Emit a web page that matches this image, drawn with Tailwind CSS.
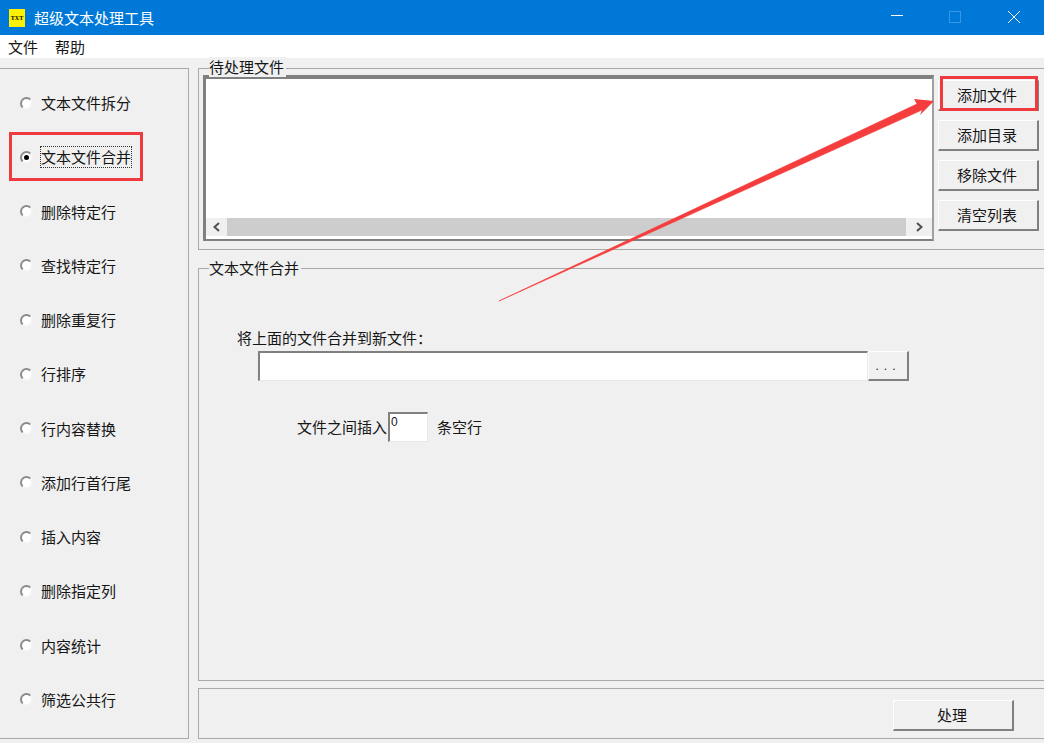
<!DOCTYPE html>
<html lang="zh">
<head>
<meta charset="utf-8">
<script src="https://cdn.jsdelivr.net/npm/@tailwindcss/browser@4"></script>
<title>超级文本处理工具</title>
</head>
<body>
<div class="relative flex h-[743px] w-[1044px] flex-col overflow-hidden bg-[#f0f0f0] font-['Noto_Sans_CJK_SC','Noto_Sans',sans-serif] text-[15px] leading-[20px] text-[#161616]">

  <!-- title bar -->
  <div class="flex h-[35px] shrink-0 items-center bg-[#0078d7] text-white">
    <div class="ml-[9px] flex h-[18px] w-[16px] items-center justify-center bg-[#fff200] font-['Liberation_Serif',serif] text-[6px] font-bold leading-none text-black">TXT</div>
    <span class="ml-[9px]">超级文本处理工具</span>
    <div class="mb-[2px] ml-auto flex items-center">
      <svg class="mr-[46px]" width="12" height="12" viewBox="0 0 12 12"><path d="M0 4.500H12" stroke="#fff" stroke-width="1"/></svg>
      <svg class="mr-[47px]" width="12" height="12" viewBox="0 0 12 12"><rect x=".5" y=".5" width="11" height="11" fill="none" stroke="#3b97e3"/></svg>
      <svg class="mr-[24px]" width="12" height="12" viewBox="0 0 12 12"><path d="M0 0L12 12M12 0L0 12" stroke="#fff" stroke-width="1"/></svg>
    </div>
  </div>

  <!-- menu bar -->
  <div class="flex h-[23px] shrink-0 items-center gap-[17px] bg-white pl-[8px]">
    <span>文件</span>
    <span>帮助</span>
  </div>

  <!-- main -->
  <div class="flex min-h-0 flex-1 gap-[9px] pt-[10px] pb-[4px]">

    <!-- left radios -->
    <div class="grid w-[189px] shrink-0 grid-rows-12 border border-l-0 border-[#a9a9a9] pt-[7px] pb-[11px] pl-[20px]">
      <div class="flex items-center gap-[8px]"><span class="h-[13px] w-[13px] rounded-full border-2 border-t-[#8a8a8a] border-r-[#f4f4f4] border-b-[#f4f4f4] border-l-[#8a8a8a] bg-white"></span><span>文本文件拆分</span></div>
      <div class="flex items-center gap-[8px]"><span class="flex h-[13px] w-[13px] items-center justify-center rounded-full border-2 border-t-[#8a8a8a] border-r-[#f4f4f4] border-b-[#f4f4f4] border-l-[#8a8a8a] bg-white"><span class="h-[5px] w-[5px] rounded-full bg-black"></span></span><span class="-ml-px border border-dotted border-[#333]">文本文件合并</span></div>
      <div class="flex items-center gap-[8px]"><span class="h-[13px] w-[13px] rounded-full border-2 border-t-[#8a8a8a] border-r-[#f4f4f4] border-b-[#f4f4f4] border-l-[#8a8a8a] bg-white"></span><span>删除特定行</span></div>
      <div class="flex items-center gap-[8px]"><span class="h-[13px] w-[13px] rounded-full border-2 border-t-[#8a8a8a] border-r-[#f4f4f4] border-b-[#f4f4f4] border-l-[#8a8a8a] bg-white"></span><span>查找特定行</span></div>
      <div class="flex items-center gap-[8px]"><span class="h-[13px] w-[13px] rounded-full border-2 border-t-[#8a8a8a] border-r-[#f4f4f4] border-b-[#f4f4f4] border-l-[#8a8a8a] bg-white"></span><span>删除重复行</span></div>
      <div class="flex items-center gap-[8px]"><span class="h-[13px] w-[13px] rounded-full border-2 border-t-[#8a8a8a] border-r-[#f4f4f4] border-b-[#f4f4f4] border-l-[#8a8a8a] bg-white"></span><span>行排序</span></div>
      <div class="flex items-center gap-[8px]"><span class="h-[13px] w-[13px] rounded-full border-2 border-t-[#8a8a8a] border-r-[#f4f4f4] border-b-[#f4f4f4] border-l-[#8a8a8a] bg-white"></span><span>行内容替换</span></div>
      <div class="flex items-center gap-[8px]"><span class="h-[13px] w-[13px] rounded-full border-2 border-t-[#8a8a8a] border-r-[#f4f4f4] border-b-[#f4f4f4] border-l-[#8a8a8a] bg-white"></span><span>添加行首行尾</span></div>
      <div class="flex items-center gap-[8px]"><span class="h-[13px] w-[13px] rounded-full border-2 border-t-[#8a8a8a] border-r-[#f4f4f4] border-b-[#f4f4f4] border-l-[#8a8a8a] bg-white"></span><span>插入内容</span></div>
      <div class="flex items-center gap-[8px]"><span class="h-[13px] w-[13px] rounded-full border-2 border-t-[#8a8a8a] border-r-[#f4f4f4] border-b-[#f4f4f4] border-l-[#8a8a8a] bg-white"></span><span>删除指定列</span></div>
      <div class="flex items-center gap-[8px]"><span class="h-[13px] w-[13px] rounded-full border-2 border-t-[#8a8a8a] border-r-[#f4f4f4] border-b-[#f4f4f4] border-l-[#8a8a8a] bg-white"></span><span>内容统计</span></div>
      <div class="flex items-center gap-[8px]"><span class="h-[13px] w-[13px] rounded-full border-2 border-t-[#8a8a8a] border-r-[#f4f4f4] border-b-[#f4f4f4] border-l-[#8a8a8a] bg-white"></span><span>筛选公共行</span></div>
    </div>

    <!-- right column -->
    <div class="flex min-w-0 flex-1 flex-col">

      <!-- files group -->
      <div class="relative flex h-[182px] shrink-0 border border-r-0 border-[#a9a9a9] pt-[6px] pl-[4px]">
        <span class="absolute top-[-12px] left-[10px] bg-[#f0f0f0] pr-[2px]">待处理文件</span>
        <div class="flex h-[166px] w-[731px] shrink-0 flex-col border-t-[4px] border-r-2 border-b-2 border-l-[3px] border-t-[#808080] border-r-[#a0a0a0] border-b-[#808080] border-l-[#808080] bg-white">
          <div class="flex-1"></div>
          <div class="mb-[3px] flex h-[18px] shrink-0 bg-[#f0f0f0]">
            <div class="flex w-[21px] shrink-0 items-center justify-center">
              <svg width="9" height="10" viewBox="0 0 9 10"><path d="M7 1L2.500 5L7 9" fill="none" stroke="#505050" stroke-width="2"/></svg>
            </div>
            <div class="flex-1 bg-[#cdcdcd]"></div>
            <div class="flex w-[26px] shrink-0 items-center justify-center">
              <svg width="9" height="10" viewBox="0 0 9 10"><path d="M2 1L6.500 5L2 9" fill="none" stroke="#505050" stroke-width="2"/></svg>
            </div>
          </div>
        </div>
        <div class="ml-[4px] flex w-[101px] shrink-0 flex-col gap-[9px] pt-[5px]">
          <div class="flex h-[31px] items-center justify-center border-t border-r-2 border-b-2 border-l border-t-white border-r-[#808080] border-b-[#808080] border-l-white pr-[2px]">添加文件</div>
          <div class="flex h-[31px] items-center justify-center border-t border-r-2 border-b-2 border-l border-t-white border-r-[#808080] border-b-[#808080] border-l-white pr-[2px]">添加目录</div>
          <div class="flex h-[31px] items-center justify-center border-t border-r-2 border-b-2 border-l border-t-white border-r-[#808080] border-b-[#808080] border-l-white pr-[2px]">移除文件</div>
          <div class="flex h-[31px] items-center justify-center border-t border-r-2 border-b-2 border-l border-t-white border-r-[#808080] border-b-[#808080] border-l-white pr-[2px]">清空列表</div>
        </div>
      </div>

      <!-- merge group -->
      <div class="relative mt-[18px] flex h-[413px] shrink-0 flex-col border border-r-0 border-[#a9a9a9] pt-[59px]">
        <span class="absolute top-[-11px] left-[10px] bg-[#f0f0f0] pr-[2px]">文本文件合并</span>
        <div class="ml-[38px]">将上面的文件合并到新文件：</div>
        <div class="mt-[3px] ml-[59px] flex h-[30px] w-[651px]">
          <div class="w-[610px] border-t-2 border-r border-b border-l-2 border-t-[#808080] border-r-[#e8e8e8] border-b-[#e8e8e8] border-l-[#808080] bg-white"></div>
          <div class="flex w-[41px] items-center justify-center border-t border-r-2 border-b-2 border-l border-t-white border-r-[#808080] border-b-[#808080] border-l-white font-['Liberation_Sans',sans-serif] text-[12px] tracking-[5px]">...</div>
        </div>
        <div class="mt-[31px] ml-[98px] flex h-[30px] items-center">
          <span>文件之间插入</span>
          <div class="ml-px h-[30px] w-[40px] border-t-2 border-r border-b border-l-2 border-t-[#808080] border-r-[#e8e8e8] border-b-[#e8e8e8] border-l-[#808080] bg-white pl-px font-['Liberation_Sans',sans-serif] text-[12px] leading-[16px]">0</div>
          <span class="ml-[9px]">条空行</span>
        </div>
      </div>

      <!-- bottom panel -->
      <div class="mt-[7px] flex min-h-0 flex-1 items-start justify-end border border-r-0 border-[#a9a9a9] pt-[11px] pr-[30px]">
        <div class="flex h-[31px] w-[121px] items-center justify-center border-t border-r-2 border-b-2 border-l border-t-white border-r-[#808080] border-b-[#808080] border-l-white pr-[2px]">处理</div>
      </div>
    </div>
  </div>

  <!-- annotation overlays -->
  <div class="absolute top-[132px] left-[9px] h-[49px] w-[134px] border-[3px] border-[#ef3b3f]"></div>
  <div class="absolute top-[76px] left-[940px] h-[35px] w-[98px] border-[3px] border-[#ef3b3f]"></div>
  <svg class="absolute top-0 left-0" width="1044" height="743" viewBox="0 0 1044 743">
    <polygon points="499,301 919,103 922,110 499,301" fill="#f53d3d" stroke="#f53d3d" stroke-width="0.6"/>
    <polygon points="934,101 914,99 917,104.500 922,110 920,115" fill="#f53d3d"/>
  </svg>
</div>
</body>
</html>
